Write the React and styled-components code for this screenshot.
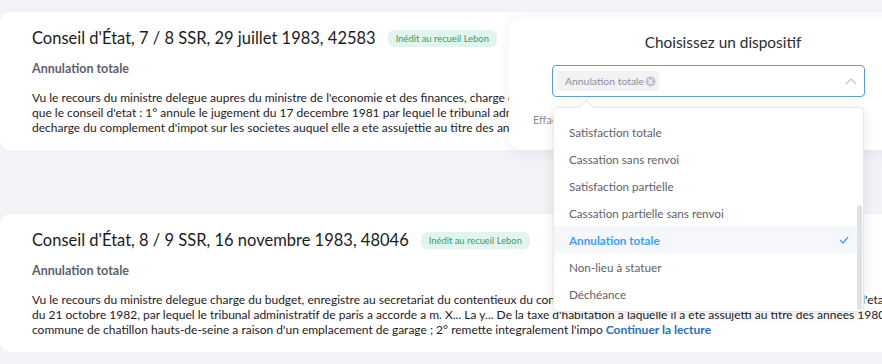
import React from "react";
import styled, { createGlobalStyle } from "styled-components";

const GlobalStyle = createGlobalStyle`
  html, body {
    margin: 0;
    padding: 0;
    background: #f2f3f7;
    font-family: Lato, "Open Sans", sans-serif;
    overflow: hidden;
  }
`;

const decisions = [
  {
    id: 42583,
    title: "Conseil d'État, 7 / 8 SSR, 29 juillet 1983, 42583",
    outcome: "Annulation totale",
    lines: [
      "Vu le recours du ministre delegue aupres du ministre de l'economie et des finances, charge du budget, enregistre le 15 avril 1982 au secretariat du contentieux du conseil d'etat",
      "que le conseil d'etat : 1° annule le jugement du 17 decembre 1981 par lequel le tribunal administratif de paris a accorde a la societe anonyme la",
      "decharge du complement d'impot sur les societes auquel elle a ete assujettie au titre des annees 1973 et 1974 ; 2° remette integralement l'impo",
    ],
  },
  {
    id: 48046,
    title: "Conseil d'État, 8 / 9 SSR, 16 novembre 1983, 48046",
    outcome: "Annulation totale",
    lines: [
      "Vu le recours du ministre delegue charge du budget, enregistre au secretariat du contentieux du conseil d'etat le 4 janvier 1983, et tendant a ce que le conseil d'etat",
      "du 21 octobre 1982, par lequel le tribunal administratif de paris a accorde a m. X... La y... De la taxe d'habitation a laquelle il a ete assujetti au titre des annees 1980 et",
      "commune de chatillon hauts-de-seine a raison d'un emplacement de garage ; 2° remette integralement l'impo",
    ],
    more: true,
  },
];

const options = [
  "Satisfaction totale",
  "Cassation sans renvoi",
  "Satisfaction partielle",
  "Cassation partielle sans renvoi",
  "Annulation totale",
  "Non-lieu à statuer",
  "Déchéance",
];

const Page = styled.div`
  position: relative;
  width: 882px;
  height: 364px;
  overflow: hidden;
`;

const List = styled.div`
  display: flex;
  flex-direction: column;
  gap: 64px;
  padding-top: 12px;
  width: 1100px;
`;

const Card = styled.article`
  background: #fff;
  border-radius: 10px;
  height: 138px;
  box-sizing: border-box;
  padding: 14px 32px 0;
`;

const TitleRow = styled.div`
  display: flex;
  align-items: center;
  gap: 12px;
  height: 24px;
`;

const Title = styled.h2`
  margin: 0;
  font-size: 16.5px;
  font-weight: 400;
  color: #1b1c20;
  white-space: nowrap;
`;

const Badge = styled.span`
  background: #e2f5ec;
  color: #3b9b6d;
  font-size: 9.4px;
  line-height: 11px;
  padding: 3px 8px;
  border-radius: 6px;
  white-space: nowrap;
`;

const Outcome = styled.div`
  margin-top: 11px;
  font-size: 12.5px;
  font-weight: 700;
  color: #5b5f6b;
`;

const Excerpt = styled.p`
  margin: 14px 0 0;
  font-size: 12px;
  line-height: 15px;
  color: #1f2024;
  white-space: nowrap;
`;

const More = styled.a`
  color: #2e6cc4;
  font-weight: 700;
  text-decoration: none;
`;

const Popover = styled.div`
  position: absolute;
  top: 17px;
  left: 509px;
  width: 428px;
  height: 133px;
  box-sizing: border-box;
  background: #fff;
  border-radius: 14px;
  box-shadow: 0 2px 14px rgba(30, 35, 60, 0.08);
  padding: 16px 0 0 43px;
`;

const PopTitle = styled.div`
  font-size: 15.4px;
  color: #2b2d33;
  text-align: center;
  margin-left: -43px;
  line-height: 19px;
`;

const Select = styled.div`
  position: relative;
  margin-top: 13px;
  width: 313px;
  height: 32px;
  box-sizing: border-box;
  border: 1px solid #5a9fdf;
  border-radius: 4px;
  display: flex;
  align-items: center;
  padding: 0 7px 0 4px;
`;

const Tag = styled.span`
  display: inline-flex;
  align-items: center;
  gap: 1px;
  height: 20px;
  padding: 0 3px 0 8px;
  background: #f0f2f5;
  border-radius: 3px;
  color: #8e9198;
  font-size: 10.4px;
`;

const Chevron = styled.svg`
  margin-left: auto;
`;

const Footer = styled.div`
  margin: 16px 0 0 -19px;
  font-size: 11px;
  color: #8a8d95;
`;

const Menu = styled.div`
  position: absolute;
  top: 107px;
  left: 553px;
  width: 311px;
  height: 205px;
  background: #fff;
  border: 1px solid #e6e8ee;
  border-radius: 4px;
  box-sizing: border-box;
  box-shadow: 0 2px 12px rgba(0, 0, 0, 0.1);
  padding-top: 10px;

  &::before {
    content: "";
    position: absolute;
    top: -6px;
    left: 27px;
    width: 10px;
    height: 10px;
    background: #fff;
    border-left: 1px solid #e6e8ee;
    border-top: 1px solid #e6e8ee;
    transform: rotate(45deg);
  }
`;

const Option = styled.div`
  position: relative;
  height: 27px;
  display: flex;
  align-items: center;
  padding: 0 14px 0 15px;
  font-size: 11.7px;
  color: ${(p) => (p.$selected ? "#409eff" : "#5f6167")};
  font-weight: ${(p) => (p.$selected ? 700 : 400)};
  background: ${(p) => (p.$selected ? "#f5f7fa" : "transparent")};
`;

const Check = styled.svg`
  margin-left: auto;
`;

const Thumb = styled.div`
  position: absolute;
  right: 1px;
  top: 97px;
  width: 5px;
  height: 105px;
  border-radius: 3px;
  background: #dfe1e6;
`;

function Decision({ item }) {
  return (
    <Card>
      <TitleRow>
        <Title>{item.title}</Title>
        <Badge>Inédit au recueil Lebon</Badge>
      </TitleRow>
      <Outcome>{item.outcome}</Outcome>
      <Excerpt>
        {item.lines.map((line, i) => (
          <React.Fragment key={i}>
            {line}
            {i < item.lines.length - 1 ? <br /> : null}
          </React.Fragment>
        ))}
        {item.more && <More href="#"> Continuer la lecture</More>}
      </Excerpt>
    </Card>
  );
}

export default function App() {
  return (
    <Page>
      <GlobalStyle />
      <List>
        {decisions.map((d) => (
          <Decision key={d.id} item={d} />
        ))}
      </List>

      <Popover>
        <PopTitle>Choisissez un dispositif</PopTitle>
        <Select>
          <Tag>
            Annulation totale
            <svg width="11" height="11" viewBox="0 0 12 12">
              <circle cx="6" cy="6" r="5.5" fill="#c0c4cc" />
              <path d="M4 4l4 4M8 4l-4 4" stroke="#fff" strokeWidth="1.2" strokeLinecap="round" />
            </svg>
          </Tag>
          <Chevron width="12" height="8" viewBox="0 0 12 8">
            <path d="M1 7l5-5 5 5" fill="none" stroke="#c0c4cc" strokeWidth="1.2" />
          </Chevron>
        </Select>
        <Footer>Effacer</Footer>
      </Popover>

      <Menu>
        {options.map((o) => (
          <Option key={o} $selected={o === "Annulation totale"}>
            {o}
            {o === "Annulation totale" && (
              <Check width="10" height="8" viewBox="0 0 10 8">
                <path d="M1 4l3 3 5-6" fill="none" stroke="#409eff" strokeWidth="1.3" />
              </Check>
            )}
          </Option>
        ))}
        <Thumb />
      </Menu>
    </Page>
  );
}
